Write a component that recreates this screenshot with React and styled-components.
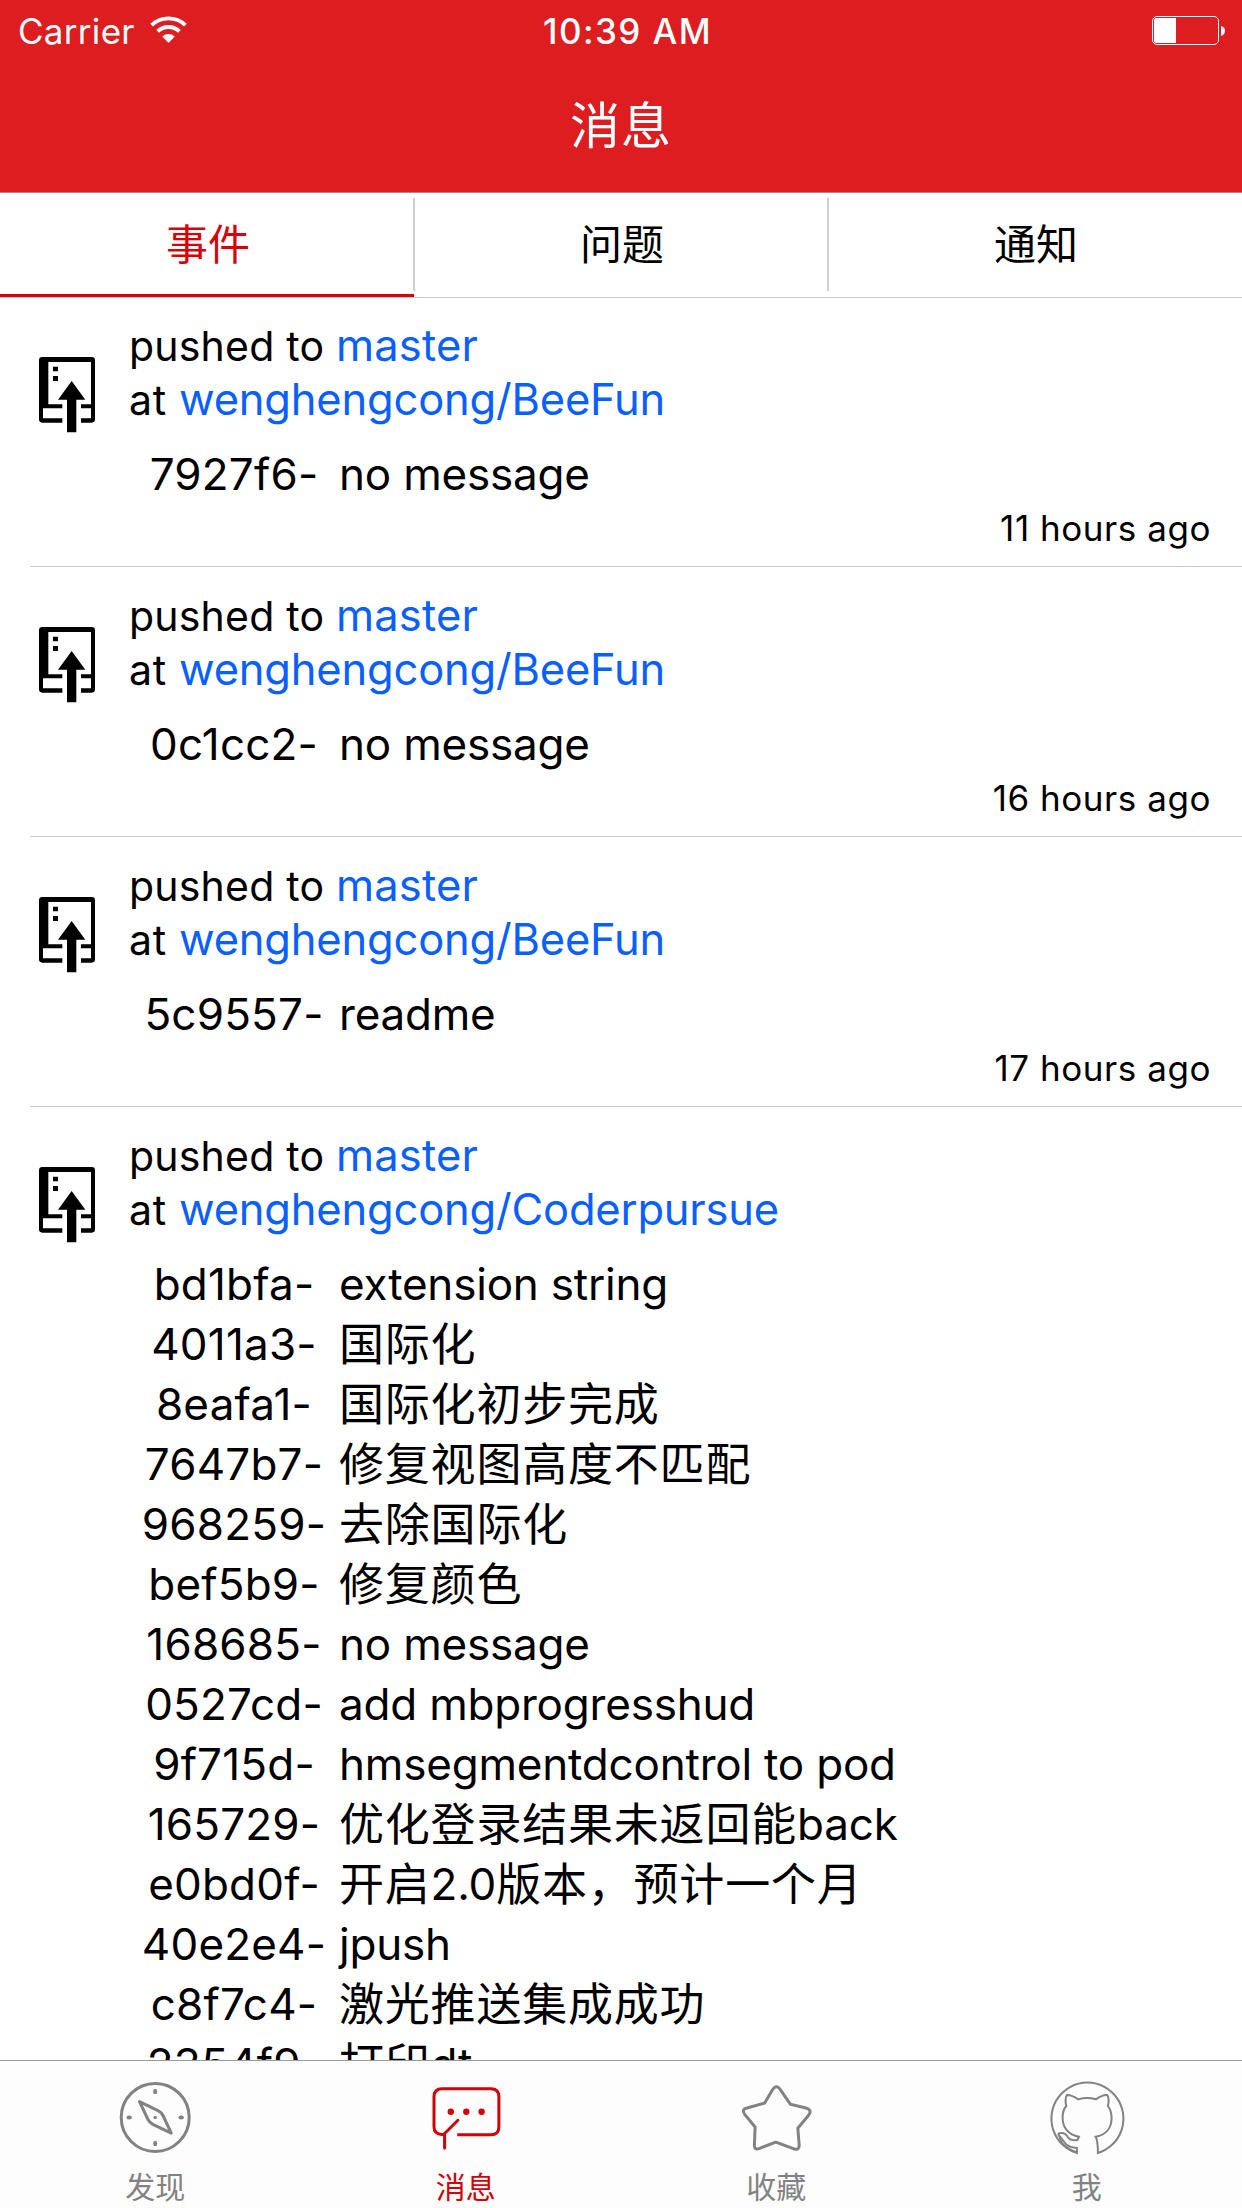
import React from 'react';
import styled, { createGlobalStyle } from 'styled-components';

const GlobalStyle = createGlobalStyle`
  * { box-sizing: border-box; }
  body { margin: 0; background: #fff; }
`;

const Screen = styled.div`
  width: 1242px;
  height: 2208px;
  display: flex;
  flex-direction: column;
  overflow: hidden;
  background: #fff;
  color: #000;
  font-family: Inter, "Noto Sans CJK SC", sans-serif;
`;

const Header = styled.header`
  flex: none;
  height: 193px;
  background: #dd1d20;
  border-bottom: 1px solid #9a8f8f;
  color: #fff;
`;

const StatusBar = styled.div`
  height: 60px;
  display: grid;
  grid-template-columns: 1fr auto 1fr;
  align-items: center;
  padding: 2px 17px 0 18px;
  font-size: 35px;
  line-height: 58px;
`;

const Carrier = styled.div`
  display: flex;
  align-items: center;
  gap: 15px;
  letter-spacing: 0.3px;
  svg { margin-top: -3px; }
`;

const Clock = styled.div`
  font-weight: 500;
  letter-spacing: 1.4px;
  padding-left: 12px;
`;

const BatteryBox = styled.div`
  display: flex;
  justify-content: flex-end;
  svg { margin-top: -2px; }
`;

const NavTitle = styled.h1`
  margin: 0;
  height: 132px;
  text-align: center;
  font-size: 50px;
  font-weight: 400;
  line-height: 133px;
  letter-spacing: 1px;
`;

const Segments = styled.nav`
  flex: none;
  height: 104px;
  display: grid;
  grid-template-columns: repeat(3, 1fr);
  background: #fff;
`;

const Segment = styled.div`
  position: relative;
  text-align: center;
  padding-left: 2px;
  font-size: 42px;
  line-height: 104px;
  height: 104px;
  color: ${(p) => (p.$active ? '#d90007' : '#000')};
  box-shadow: ${(p) => (p.$active ? 'inset 0 -3px 0 #d90007' : 'none')};

  &:not(:first-child)::before {
    content: '';
    position: absolute;
    left: -1px;
    top: 5px;
    width: 2px;
    height: 93px;
    background: #cfcfcf;
  }
`;

const Feed = styled.main`
  flex: 1;
  min-height: 0;
  overflow: hidden;
  box-shadow: inset 0 1px 0 #cccccc;
`;

const EventRow = styled.article`
  margin-left: 30px;
  padding: 22px 31px 20px 9px;
  display: grid;
  grid-template-columns: 56px 1fr;
  column-gap: 34px;
  border-bottom: 1px solid #cccccc;
`;

const EventIcon = styled.div`
  padding-top: 38px;
  svg { display: block; }
`;

const Summary = styled.div`
  font-size: 41px;
  line-height: 54px;
  letter-spacing: 0.2px;
`;

const Preposition = styled.span`
  letter-spacing: 0.7px;
`;

const Link = styled.a`
  color: #0a60fe;
  font-size: 43.5px;
  line-height: 1;
  letter-spacing: ${(p) => p.$spacing || 0}px;
`;

const Commits = styled.ul`
  list-style: none;
  margin: 17px 0 0;
  padding: 0;
`;

const Commit = styled.li`
  display: grid;
  grid-template-columns: 210px 1fr;
  height: 60px;
  font-size: 44px;
  line-height: 60px;
  white-space: nowrap;
`;

const Hash = styled.span`
  text-align: center;
  letter-spacing: 0.2px;
`;

const Message = styled.span`
  letter-spacing: -0.2px;
`;

const Han = styled.span`
  position: relative;
  top: 1px;
  font-size: 45px;
  line-height: 1;
  letter-spacing: 0.8px;
`;

const Time = styled.time`
  grid-column: 2;
  margin-top: 6px;
  text-align: right;
  font-size: 35px;
  line-height: 36px;
  letter-spacing: 0.55px;
`;

const TabBar = styled.footer`
  flex: none;
  height: 148px;
  display: grid;
  grid-template-columns: repeat(4, 1fr);
  border-top: 1px solid #9c9c9d;
  background: #fdfdfd;
`;

const Tab = styled.div`
  display: flex;
  flex-direction: column;
  align-items: center;
  padding-top: 16px;
  color: ${(p) => (p.$active ? '#d20007' : '#828282')};
`;

const TabLabel = styled.span`
  margin-top: 10px;
  font-size: 30px;
  line-height: 40px;
`;

const Wifi = () => (
  <svg width="37" height="28" viewBox="0 0 37 28" fill="none" stroke="#fff" strokeWidth="3.9">
    <path d="M1.6 9.1 A24.5 24.5 0 0 1 35.4 9.1" />
    <path d="M7.6 15.4 A15.8 15.8 0 0 1 29.4 15.4" />
    <path d="M18.5 27 L12.3 20.4 A9.5 9.5 0 0 1 24.7 20.4 Z" fill="#fff" stroke="none" />
  </svg>
);

const Battery = () => (
  <svg width="73" height="29" viewBox="0 0 73 29">
    <rect x="0.5" y="0.5" width="66" height="28" rx="4.5" fill="none" stroke="#fff" />
    <path d="M4 2 H24 V27 H4 Q2 27 2 25 V4 Q2 2 4 2 Z" fill="#fff" />
    <path d="M69 10 Q73 11 73 14.7 Q73 18.5 69 20 Z" fill="#fff" />
  </svg>
);

const RepoPush = () => (
  <svg width="56" height="76" viewBox="57 50 168 228">
    <path
      fillRule="evenodd"
      d="M67 50 H215 Q225 50 225 60 V237 Q225 247 215 247 H183 V234 H213 V204 H183 V192 H213 V65 H85 V192 H127 V204 H69 V234 H127 V247 H67 Q57 247 57 237 V60 Q57 50 67 50 Z"
    />
    <path d="M99 79 H114 V93 H99 Z M99 107 H114 V122 H99 Z" />
    <path d="M155 122 L196 178 H169 V276 H141 V178 H114 Z" />
  </svg>
);

const iconProps = {
  width: 80,
  height: 80,
  viewBox: '0 0 80 80',
  fill: 'none',
  stroke: 'currentColor',
  strokeLinecap: 'round',
  strokeLinejoin: 'round',
};

const Compass = () => (
  <svg {...iconProps} strokeWidth="3">
    <circle cx="40.2" cy="40.4" r="34" />
    <path d="M24.5 24.7 L43 33.6 Q46.4 35.3 48 38.5 L56.2 56.2 L37.8 47.4 Q34.7 45.7 33 42.5 Z" />
    <g fill="currentColor" stroke="none">
      <circle cx="40.2" cy="40.4" r="1.7" />
      <ellipse cx="40.2" cy="14.4" rx="2" ry="2.7" />
      <ellipse cx="40.2" cy="66.4" rx="2" ry="2.7" />
      <ellipse cx="14.2" cy="40.4" rx="2.7" ry="2" />
      <ellipse cx="66.2" cy="40.4" rx="2.7" ry="2" />
    </g>
  </svg>
);

const Bubble = () => (
  <svg {...iconProps} strokeWidth="3" strokeLinecap="butt">
    <path d="M31.2 57.8 H65 Q72.9 57.8 72.9 49.8 V19.7 Q72.9 11.7 65 11.7 H16 Q8 11.7 8 19.7 V49.8 Q8 57.2 16 57.6 L18.6 57" />
    <path d="M31.9 43.3 L18.6 56.5 V71" strokeLinecap="round" />
    <g fill="currentColor" stroke="none">
      <circle cx="24.8" cy="34.7" r="3.2" />
      <circle cx="40.3" cy="34.7" r="3.2" />
      <circle cx="55.6" cy="34.7" r="3.2" />
    </g>
  </svg>
);

const Star = () => (
  <svg {...iconProps} strokeWidth="3">
    <path d="M36.5 12.8 Q40.5 6.6 44.5 12.8 L54.3 27.2 L70 31 Q76.4 32.8 72.8 38 L61.8 51.2 L63.2 68 Q63.2 73.8 58 71.8 L39.8 65.2 L23 71.6 Q18.2 73.2 18.4 68 L19.1 50 L9 37.8 Q5 32.4 11 31 L28.7 26 Z" />
  </svg>
);

const Octocat = () => (
  <svg {...iconProps}>
    <g transform="translate(-6.75 -7) scale(0.33333)" strokeWidth="6" strokeLinejoin="miter">
      <path d="M173 249 A108 108 0 1 0 110 249 V234 C76 233 72 214 62 203 C57 198 51 193 57 190 C70 187 78 192 84 203 C90 211 98 212 111 210 L116 200 C84 195 67 172 67 143 C67 128 70 117 78 108 C75 95 76 82 80 75 C92 74 102 80 114 88 C130 83 150 83 167 88 C178 80 190 74 201 75 C205 82 206 95 203 108 C210 117 214 128 214 143 C214 172 199 195 166 200 C172 210 173 220 173 249 Z" />
      <path d="M57 196 C60 222 78 236 108 246" strokeWidth="5" />
    </g>
  </svg>
);

const EVENTS = [
  { repo: 'wenghengcong/BeeFun', time: '11 hours ago', commits: [['7927f6-', 'no message']] },
  { repo: 'wenghengcong/BeeFun', time: '16 hours ago', commits: [['0c1cc2-', 'no message']] },
  { repo: 'wenghengcong/BeeFun', time: '17 hours ago', commits: [['5c9557-', 'readme']] },
  {
    repo: 'wenghengcong/Coderpursue',
    commits: [
      ['bd1bfa-', 'extension string'],
      ['4011a3-', '国际化'],
      ['8eafa1-', '国际化初步完成'],
      ['7647b7-', '修复视图高度不匹配'],
      ['968259-', '去除国际化'],
      ['bef5b9-', '修复颜色'],
      ['168685-', 'no message'],
      ['0527cd-', 'add mbprogresshud'],
      ['9f715d-', 'hmsegmentdcontrol to pod'],
      ['165729-', '优化登录结果未返回能back'],
      ['e0bd0f-', '开启2.0版本，预计一个月'],
      ['40e2e4-', 'jpush'],
      ['c8f7c4-', '激光推送集成成功'],
      ['2354f9-', '打印dt'],
    ],
  },
];

const TABS = [
  { label: '发现', Icon: Compass },
  { label: '消息', Icon: Bubble, active: true },
  { label: '收藏', Icon: Star },
  { label: '我', Icon: Octocat },
];

const mixed = (text) =>
  text
    .split(/([\u4e00-\u9fff\uff0c]+)/)
    .filter(Boolean)
    .map((part, i) => (/[\u4e00-\u9fff]/.test(part) ? <Han key={i}>{part}</Han> : part));

export default function App() {
  return (
    <Screen lang="zh-CN">
      <GlobalStyle />
      <Header>
        <StatusBar>
          <Carrier>Carrier <Wifi /></Carrier>
          <Clock>10:39 AM</Clock>
          <BatteryBox><Battery /></BatteryBox>
        </StatusBar>
        <NavTitle>消息</NavTitle>
      </Header>
      <Segments>
        <Segment $active>事件</Segment>
        <Segment>问题</Segment>
        <Segment>通知</Segment>
      </Segments>
      <Feed>
        {EVENTS.map((event) => (
          <EventRow key={event.commits[0][0]}>
            <EventIcon><RepoPush /></EventIcon>
            <div>
              <Summary>
                pushed to <Link $spacing={0.2}>master</Link>
                <br />
                <Preposition>at </Preposition><Link $spacing={-0.2}>{event.repo}</Link>
              </Summary>
              <Commits>
                {event.commits.map(([hash, message]) => (
                  <Commit key={hash}>
                    <Hash>{hash}</Hash>
                    <Message>{mixed(message)}</Message>
                  </Commit>
                ))}
              </Commits>
            </div>
            {event.time && <Time>{event.time}</Time>}
          </EventRow>
        ))}
      </Feed>
      <TabBar>
        {TABS.map(({ label, Icon, active }) => (
          <Tab key={label} $active={active}>
            <Icon />
            <TabLabel>{label}</TabLabel>
          </Tab>
        ))}
      </TabBar>
    </Screen>
  );
}
